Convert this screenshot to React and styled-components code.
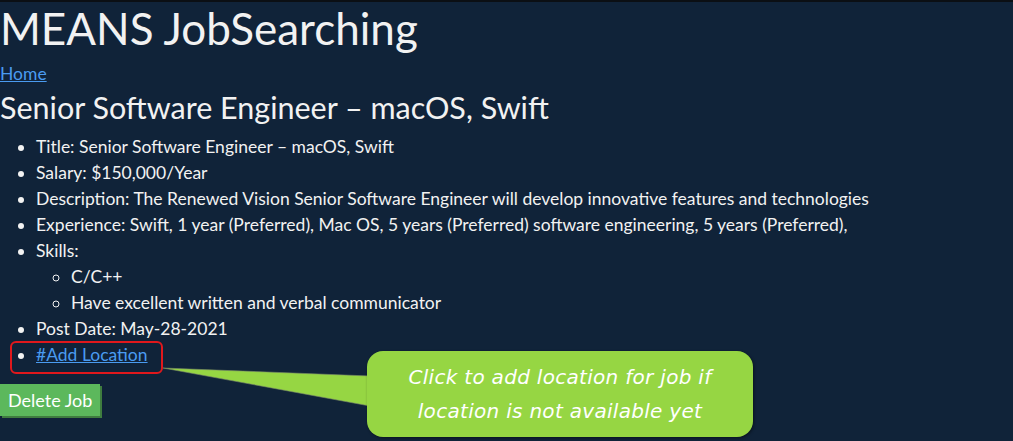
import React from "react";
import styled, { createGlobalStyle } from "styled-components";

const Global = createGlobalStyle`
  html, body { margin: 0; padding: 0; }
  body {
    background: #102339;
    color: #f2f2f2;
    font-family: Lato, "Open Sans", sans-serif;
    border-top: 2px solid #0b0f14;
    min-height: 439px;
    overflow: hidden;
  }
`;

const Page = styled.div`
  position: relative;
  padding: 0;
`;

const Title = styled.h1`
  margin: 0;
  font-size: 44px;
  font-weight: 400;
  line-height: 52px;
`;

const HomeLink = styled.a`
  display: block;
  margin-top: 10px;
  color: #4a9bf0;
  font-size: 17.5px;
  line-height: 20px;
  text-decoration: underline;
`;

const JobName = styled.h2`
  margin: 5px 0 0;
  font-size: 30.5px;
  font-weight: 400;
  line-height: 36px;
`;

const List = styled.ul`
  margin: 9px 0 0;
  padding-left: 36px;
  font-size: 17.5px;
  line-height: 26px;
  list-style: disc;
`;

const SubList = styled.ul`
  margin: 0;
  padding-left: 35px;
  list-style: circle;
`;

const Item = styled.li``;

const LocationLink = styled.a`
  color: #4a9bf0;
  text-decoration: underline;
`;

const DeleteButton = styled.button`
  display: block;
  margin-top: 16px;
  padding: 0 8px;
  height: 32px;
  border: none;
  background: #5cb85c;
  color: #fff;
  font-family: Lato, sans-serif;
  font-size: 18px;
  box-shadow: 2px 2px 0 #3f7d3f;
  cursor: pointer;
`;

const Highlight = styled.div`
  position: absolute;
  left: 10px;
  top: 339px;
  width: 149px;
  height: 29px;
  border: 2px solid #e0181c;
  border-radius: 6px;
`;

const CalloutTail = styled.svg`
  position: absolute;
  left: 0;
  top: 0;
  overflow: visible;
`;

const Callout = styled.div`
  position: absolute;
  left: 367px;
  top: 349px;
  width: 386px;
  height: 86px;
  box-sizing: border-box;
  border-radius: 16px;
  background: #96d643;
  box-shadow: 1px 1px 3px rgba(0, 0, 0, 0.45);
  display: flex;
  align-items: center;
  justify-content: center;
  text-align: center;
  color: #ffffff;
  font-family: "DejaVu Sans", sans-serif;
  font-style: italic;
  font-size: 20px;
  line-height: 34px;
  letter-spacing: 0.3px;
`;

export default function App() {
  return (
    <>
      <Global />
      <Page>
        <Title>MEANS JobSearching</Title>
        <HomeLink href="#">Home</HomeLink>
        <JobName>Senior Software Engineer – macOS, Swift</JobName>
        <List>
          <Item>Title: Senior Software Engineer – macOS, Swift</Item>
          <Item>Salary: $150,000/Year</Item>
          <Item>
            Description: The Renewed Vision Senior Software Engineer will develop
            innovative features and technologies
          </Item>
          <Item>
            Experience: Swift, 1 year (Preferred), Mac OS, 5 years (Preferred)
            software engineering, 5 years (Preferred),
          </Item>
          <Item>
            Skills:
            <SubList>
              <Item>C/C++</Item>
              <Item>Have excellent written and verbal communicator</Item>
            </SubList>
          </Item>
          <Item>Post Date: May-28-2021</Item>
          <Item>
            <LocationLink href="#">#Add Location</LocationLink>
          </Item>
        </List>
        <DeleteButton>Delete Job</DeleteButton>
        <Highlight />
        <CalloutTail width="1" height="1">
          <polygon points="163,366 370,374 370,404" fill="#96d643" stroke="#7a8a6a" strokeWidth="0.6" />
        </CalloutTail>
        <Callout>
          Click to add location for job if
          <br />
          location is not available yet
        </Callout>
      </Page>
    </>
  );
}
